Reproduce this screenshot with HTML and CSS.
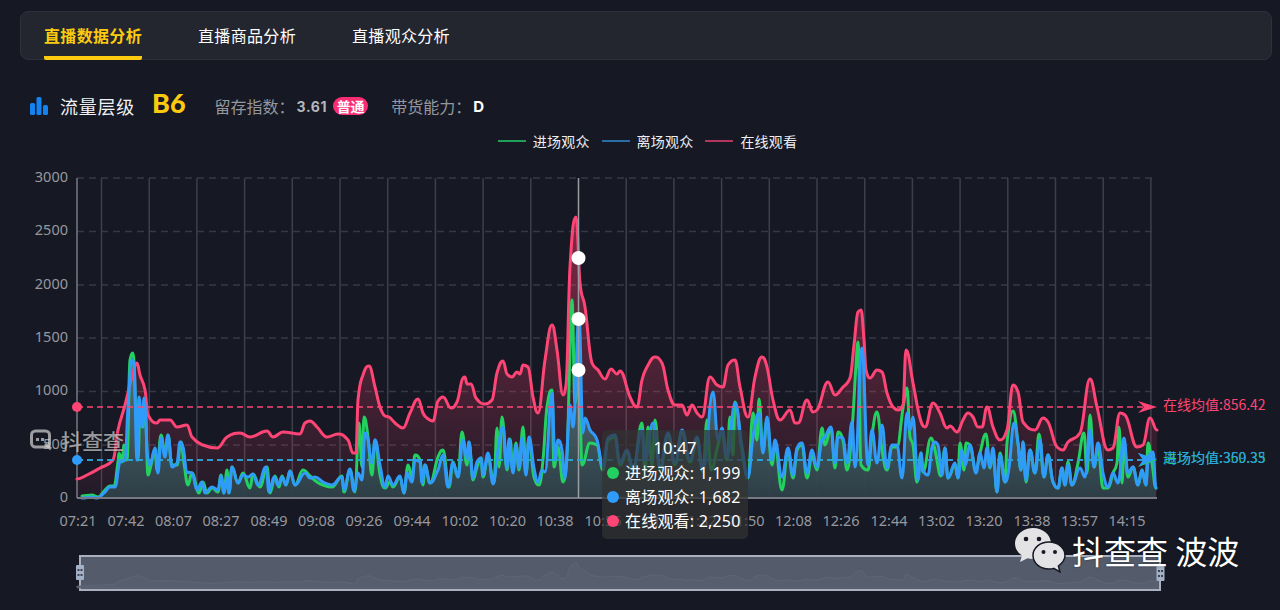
FILE: index.html
```html
<!DOCTYPE html>
<html lang="zh-CN">
<head>
<meta charset="utf-8">
<title>直播数据分析</title>
<link rel="stylesheet" href="styles.css">
</head>
<body>
<nav class="tabs">
  <a class="tab active">直播数据分析</a>
  <a class="tab">直播商品分析</a>
  <a class="tab">直播观众分析</a>
</nav>
<header class="stats">
  <svg class="bars-icon" width="18" height="18" viewBox="0 0 18 18"><rect x="0" y="6" width="5" height="12" rx="1.5"/><rect x="6.5" y="0" width="5" height="18" rx="1.5"/><rect x="13" y="8" width="5" height="10" rx="1.5"/></svg>
  <span class="stats-title">流量层级</span>
  <span class="level">B6</span>
  <span class="stat-label first">留存指数：</span>
  <span class="stat-value">3.61</span>
  <span class="badge">普通</span>
  <span class="stat-label second">带货能力：</span>
  <span class="stat-value white">D</span>
</header>
<div class="legend">
  <span class="legend-item"><i class="swatch green"></i>进场观众</span>
  <span class="legend-item"><i class="swatch blue"></i>离场观众</span>
  <span class="legend-item"><i class="swatch pink"></i>在线观看</span>
</div>
<div class="chart">
  <svg class="plot" width="1280" height="458" viewBox="0 152 1280 458">
    <defs>
      <linearGradient id="pinkFill" gradientUnits="userSpaceOnUse" x1="0" y1="217" x2="0" y2="498">
        <stop offset="0" stop-color="#ff406e" stop-opacity=".45"/>
        <stop offset="1" stop-color="#ff406e" stop-opacity=".05"/>
      </linearGradient>
      <linearGradient id="tealFill" gradientUnits="userSpaceOnUse" x1="0" y1="340" x2="0" y2="498">
        <stop offset="0" stop-color="#5e8688" stop-opacity=".8"/>
        <stop offset="1" stop-color="#2d3e47" stop-opacity=".97"/>
      </linearGradient>
    </defs>
    <g class="ylabels">
      <text x="68" y="182">3000</text><text x="68" y="235">2500</text><text x="68" y="289">2000</text>
      <text x="68" y="342">1500</text><text x="68" y="395">1000</text><text x="68" y="449">500</text><text x="68" y="502">0</text>
    </g>
    <path class="hgrid" d="M77 178H1157M77 231.5H1157M77 285H1157M77 338H1157M77 391.500H1157M77 445H1157"/>
    <path class="vgrid" d="M101.500 178V498M149.200 178V498M196.900 178V498M244.600 178V498M292.300 178V498M340 178V498M387.700 178V498M435.400 178V498M483.100 178V498M530.800 178V498M626.200 178V498M673.900 178V498M721.600 178V498M769.300 178V498M817 178V498M864.700 178V498M912.400 178V498M960.100 178V498M1007.800 178V498M1055.500 178V498M1103.200 178V498M1150.900 178V498"/>
    <path class="yaxis" d="M77 178V498"/>
    <path id="pinkArea" class="area-pink"/>
    <path id="tealArea" class="area-teal"/>
    <path id="greenLine" class="line line-green"/>
    <path id="pinkLine" class="line line-pink"/>
    <path id="blueLine" class="line line-blue"/>
    <path class="xaxis" d="M77 498H1157"/>
    <path class="cross" d="M578.500 178V498"/>
    <path class="mark mark-green" d="M77 460H1145"/>
    <path class="mark mark-blue" d="M77 460H1145"/>
    <path class="mark mark-pink" d="M77 407H1145"/>
    <circle class="dot-blue" cx="77" cy="460" r="5"/>
    <circle class="dot-pink" cx="77" cy="407" r="5"/>
    <path class="dot-green" d="M1157 460L1138 453L1144 460L1138 467Z"/>
    <path class="dot-blue" d="M1157 459L1138 453L1143 460L1139 466Z"/>
    <path class="dot-pink" d="M1157 407L1138 401L1144 407L1138 413Z"/>
    <text class="avg avg-pink" x="1163" y="410">在线均值:856.42</text>
    <text class="avg avg-green" x="1163" y="463">进场均值:360.35</text>
    <text class="avg avg-blue" x="1163" y="463">离场均值:359.33</text>
    <circle class="point" cx="578.500" cy="258" r="7"/>
    <circle class="point" cx="578.500" cy="319" r="7"/>
    <circle class="point" cx="578.500" cy="370" r="7"/>
    <g class="xlabels">
      <text x="78" y="526">07:21</text><text x="126" y="526">07:42</text><text x="173.500" y="526">08:07</text>
      <text x="221" y="526">08:27</text><text x="269" y="526">08:49</text><text x="316.500" y="526">09:08</text>
      <text x="364" y="526">09:26</text><text x="412" y="526">09:44</text><text x="460" y="526">10:02</text>
      <text x="507.500" y="526">10:20</text><text x="555" y="526">10:38</text><text x="603" y="526">10:56</text>
      <text x="650.500" y="526">11:14</text><text x="698" y="526">11:32</text><text x="746" y="526">11:50</text>
      <text x="793.500" y="526">12:08</text><text x="841" y="526">12:26</text><text x="889" y="526">12:44</text>
      <text x="936.500" y="526">13:02</text><text x="984" y="526">13:20</text><text x="1032" y="526">13:38</text>
      <text x="1079.500" y="526">13:57</text><text x="1127" y="526">14:15</text>
    </g>
    <rect class="zoom-window" x="80" y="556" width="1080" height="34"/>
    <path id="miniArea" class="mini" transform="translate(0 543) scale(1 .09)"/>
    <g class="zoom-handle"><rect x="76" y="565" width="8" height="15" rx="1"/><path class="grip" d="M77.500 569h2v2h-2zM80.500 569h2v2h-2zM77.500 574h2v2h-2zM80.500 574h2v2h-2z"/></g>
    <g class="zoom-handle"><rect x="1156.500" y="566" width="8" height="15" rx="1"/><path class="grip" d="M1158 570h2v2h-2zM1161 570h2v2h-2zM1158 575h2v2h-2zM1161 575h2v2h-2z"/></g>
  </svg>

  <div class="brand">
    <svg width="24" height="22" viewBox="0 0 24 22"><rect class="brand-box" x="1.500" y="2" width="18" height="16" rx="4"/><path class="brand-tail" d="M15 15l6 5"/><path class="brand-dots" d="M6 9h3v3H6zM11 9h3v3h-3z"/></svg>
    <span>抖查查</span>
  </div>

  <div class="tooltip">
    <div class="tooltip-time">10:47</div>
    <div class="tooltip-row"><i class="tip-dot green"></i>进场观众: 1,199</div>
    <div class="tooltip-row"><i class="tip-dot blue"></i>离场观众: 1,682</div>
    <div class="tooltip-row"><i class="tip-dot pink"></i>在线观看: 2,250</div>
  </div>

  <div class="wechat">
    <svg width="52" height="46" viewBox="0 0 52 46">
      <path class="bubble" d="M19 1C9 1 1 8 1 16.500c0 5 2.800 9.300 7 12L6 35l7.500-3.700c1.800.4 3.600.7 5.500.7 10 0 18-7 18-15.500S29 1 19 1z"/>
      <path class="bubble front" d="M35 15c-9 0-16 6-16 13.500S26 42 35 42c1.600 0 3.200-.2 4.700-.6L46 45l-1.600-6c3.400-2.500 6.600-6 6.600-10.500C51 21 44 15 35 15z"/>
      <circle class="eye" cx="12" cy="12" r="2.300"/><circle class="eye" cx="25" cy="12" r="2.300"/>
      <circle class="eye" cx="29.500" cy="25" r="2"/><circle class="eye" cx="41" cy="25" r="2"/>
    </svg>
    <span>抖查查 波波</span>
  </div>
</div>
<script src="chart.js"></script>
</body>
</html>
```
FILE: styles.css
```css
* { box-sizing: border-box; }
html, body { margin: 0; height: 610px; overflow: hidden; }
body {
  background: #161924;
  color: #fff;
  font-family: "Noto Sans", "Noto Sans CJK SC", sans-serif;
}
.tabs {
  display: flex;
  gap: 56px;
  margin: 11px 8px 0 20px;
  height: 49px;
  padding: 0 23px;
  background: #23252f;
  border: 1px solid #2e303b;
  border-radius: 8px;
}
.tab {
  height: 48px;
  line-height: 46px;
  font-size: 16px;
  letter-spacing: .33px;
  color: #fff;
  font-family: "Noto Sans CJK SC", sans-serif;
}
.tab.active {
  color: #fccb0f;
  font-weight: 700;
  border-bottom: 4px solid #fccb0f;
  border-radius: 2px;
}
.stats {
  display: flex;
  align-items: center;
  height: 34px;
  margin-top: 29px;
  padding-left: 30px;
  font-family: "Noto Sans CJK SC", sans-serif;
}
.bars-icon { fill: #1283f0; margin-right: 12px; }
.stats-title { font-size: 18px; letter-spacing: .75px; color: #f2f2f4; margin-right: 18px; }
.level { font-family: Lato, sans-serif; font-weight: 900; font-size: 27px; color: #fccb0f; margin: -7px 29px 0 -1px; line-height: 30px; }
.stat-label { font-size: 16px; color: #95979e; }
.stat-label.first { width: 80px; }
.stat-label.second { width: 80px; margin-left: 23px; }
.stat-value { font-family: Inter, sans-serif; font-weight: 700; font-size: 14px; letter-spacing: .6px; color: #b4b6bc; margin-left: 2px; }
.stat-value.white { color: #fff; font-size: 15px; margin-left: 2px; }
.badge {
  margin-left: 6px;
  height: 18px;
  line-height: 18px;
  padding: 0 3.500px;
  font-size: 14px;
  font-weight: 700;
  color: #fff;
  background: #fb2b74;
  border-radius: 9px;
}
.legend {
  display: flex;
  justify-content: center;
  gap: 12px;
  height: 20px;
  margin-top: 8px;
  padding-left: 15px;
  font-family: "Noto Sans CJK SC", sans-serif;
  font-size: 14px;
  letter-spacing: .2px;
  line-height: 20px;
  color: #eceef2;
}
.legend-item { display: flex; align-items: center; gap: 7px; }
.swatch { display: block; width: 28px; height: 2px; }
.swatch.green { background: #1f9e55; }
.swatch.blue { background: #2a6ea8; }
.swatch.pink { background: #b4345c; }
.chart { position: relative; height: 458px; margin-top: 1px; }
.plot { display: block; }
.ylabels text { text-anchor: end; font-size: 14.500px; fill: #96989e; }
.xlabels text { text-anchor: middle; font-size: 14.500px; fill: #96989e; }
.hgrid { stroke: #373943; stroke-width: 1.500; stroke-dasharray: 7 5; fill: none; }
.vgrid { stroke: #3d3f4b; stroke-width: 1.500; fill: none; }
.yaxis, .xaxis { stroke: #777a82; stroke-width: 1.500; fill: none; }
.xaxis { stroke-width: 2; }
.cross { stroke: #9a9ca1; stroke-width: 1.500; fill: none; }
.area-pink { fill: url(#pinkFill); }
.area-teal { fill: url(#tealFill); }
.line { fill: none; stroke-width: 3; stroke-linejoin: round; stroke-linecap: round; }
.line-green { stroke: #22d160; }
.line-blue { stroke: #2f9bfa; }
.line-pink { stroke: #ff4576; }
.mark { fill: none; stroke-width: 1.300; stroke-dasharray: 6 4; }
.mark-pink { stroke: #ff4576; }
.mark-green { stroke: #22d160; }
.mark-blue { stroke: #2f9bfa; }
.dot-pink { fill: #ff4576; }
.dot-blue { fill: #2f9bfa; }
.dot-green { fill: #22d160; }
.avg { font-family: "Noto Sans CJK SC", sans-serif; font-size: 14px; }
.avg-pink { fill: #ff4576; }
.avg-green { fill: #22d160; }
.avg-blue { fill: #2f9bfa; opacity: .85; }
.point { fill: #fff; }
.zoom-window { fill: #545b6b; stroke: #a9b1c0; stroke-width: 2; }
.mini { fill: #575e6e; stroke: #5f6676; stroke-width: 1; vector-effect: non-scaling-stroke; }
.zoom-handle rect { fill: #a3b1c6; }
.grip { fill: #3d4350; }
.brand {
  position: absolute;
  left: 30px;
  top: 276px;
  display: flex;
  align-items: center;
  gap: 7px;
  font-family: "Noto Sans CJK SC", sans-serif;
  font-weight: 500;
  font-size: 21px;
  line-height: 24px;
  color: rgba(214, 214, 214, .7);
  text-shadow: 0 0 3px rgba(0, 0, 0, .5);
}
.brand-box, .brand-tail { fill: none; stroke: rgba(214, 214, 214, .7); stroke-width: 3; }
.brand-dots { fill: rgba(214, 214, 214, .7); }
.tooltip {
  position: absolute;
  left: 602px;
  top: 278px;
  width: 146px;
  height: 109px;
  padding: 6px 0 0 5px;
  border-radius: 5px;
  background: rgba(50, 50, 50, .72);
  font-size: 16px;
  letter-spacing: .2px;
  line-height: 24px;
  color: #fff;
}
.tooltip-time { text-align: center; padding-right: 5px; margin-bottom: 1px; font-size: 16.500px; }
.tooltip-row { display: flex; align-items: center; gap: 6px; white-space: nowrap; font-family: "Noto Sans", "Noto Sans CJK SC", sans-serif; }
.tip-dot { display: block; width: 12px; height: 12px; border-radius: 50%; }
.tip-dot.green { background: #22d160; }
.tip-dot.blue { background: #2f9bfa; }
.tip-dot.pink { background: #ff4576; }
.wechat {
  position: absolute;
  left: 1014px;
  top: 375px;
  display: flex;
  align-items: center;
  gap: 6px;
  font-family: "Noto Sans CJK SC", sans-serif;
  font-size: 32px;
  line-height: 46px;
  color: #fff;
  white-space: nowrap;
  text-shadow: 0 0 2px rgba(0, 0, 0, .6);
}
.bubble { fill: #e3e3e6; }
.bubble.front { stroke: #161924; stroke-width: 1.500; }
.eye { fill: #161924; }
```
FILE: chart.js
```js
var pink = "77,479 87,475 100,468 113,460 118,430 125,405 132,377 137,363 140,375 145,390 148,415 157,423 160,420 170,420 177,427 187,425 192,437 203,445 217,448 227,437 240,433 250,437 267,431 273,437 283,432 300,434 305,423 310,421 317,427 327,437 338,434 348,440 353,453 356,453 358,400 363,375 369,366 375,387 380,407 385,416 389,417 395,423 403,428 410,413 418,399 423,413 427,418 433,421 438,401 443,397 451,408 457,402 463,378 465,377 467,384 471,384 476,398 485,404 492,400 497,373 503,361 507,374 512,377 517,372 520,374 523,365 528,367 533,397 538,413 545,360 552,325 557,350 563,395 566,385 570,267 576,217 580,283 585,307 592,363 598,370 605,379 611,369 617,374 620,371 630,397 637,407 642,380 647,367 655,357 662,363 668,390 675,405 682,405 687,415 692,405 697,413 702,417 710,377 717,385 723,387 728,365 735,360 740,387 748,417 755,377 762,357 767,367 773,400 780,420 790,410 795,423 798,423 807,400 813,412 817,410 828,382 835,395 843,387 850,378 854,345 858,312 861,310 864,340 866,370 870,378 877,370 882,372 887,393 893,407 898,410 903,405 906,350 913,383 920,418 925,427 933,403 940,413 947,428 950,426 957,432 963,420 968,413 973,417 978,427 982,427 987,407 993,427 1000,440 1007,430 1013,385 1018,392 1023,422 1035,430 1043,418 1048,422 1057,447 1063,450 1068,442 1080,433 1090,379 1097,407 1108,450 1113,448 1120,413 1125,415 1137,447 1143,445 1150,418 1157,430";

var blue = "82,498 92,497 97,498 105,492 110,487 115,487 120,462 125,460 128,407 132,360 134,363 137,460 139,397 142,427 144,398 148,460 150,465 155,448 158,473 161,438 165,457 168,435 172,467 177,463 180,442 183,447 187,472 192,473 197,490 202,482 205,493 212,487 218,490 221,476 224,493 227,477 229,493 232,467 238,483 243,475 248,477 253,474 258,485 266,467 269,492 274,477 278,485 282,477 286,485 290,471 295,485 305,473 310,478 315,477 323,482 332,485 342,477 344,490 350,469 354,491 358,473 362,480 365,433 368,440 372,463 375,440 380,465 385,487 388,476 393,485 400,476 404,493 407,473 412,482 415,460 420,462 422,483 425,465 430,483 438,470 443,455 448,487 453,463 458,477 463,440 467,458 469,442 473,478 477,462 481,458 483,475 488,453 493,484 498,450 503,427 507,468 509,439 513,473 516,445 519,468 522,438 526,475 529,437 534,468 538,482 542,470 545,472 552,393 555,460 558,440 562,450 565,478 570,405 573,427 579,317 583,433 585,418 590,430 597,440 603,467 608,438 615,435 620,463 627,450 633,467 642,430 645,460 653,423 660,467 668,433 675,463 682,430 690,460 697,437 703,470 713,392 718,440 722,428 727,457 735,403 742,447 748,477 753,437 759,413 763,453 767,417 772,460 775,440 782,477 788,448 793,475 797,448 802,443 807,473 812,450 817,467 822,440 825,437 831,427 835,463 838,437 843,438 847,463 852,422 855,467 862,348 868,465 872,430 877,463 882,425 887,468 892,445 897,445 902,478 907,413 910,430 913,417 918,480 921,453 923,470 928,475 932,447 935,442 938,445 942,475 945,448 948,478 955,463 958,478 962,450 965,465 970,445 976,473 980,453 984,468 987,448 990,467 993,448 997,492 1000,455 1005,482 1009,468 1014,423 1018,443 1021,470 1023,442 1026,480 1030,450 1035,473 1040,440 1044,477 1048,455 1053,482 1058,488 1062,468 1065,485 1068,465 1072,485 1080,468 1085,477 1090,430 1094,467 1098,443 1103,473 1108,487 1113,473 1118,483 1124,438 1128,473 1133,467 1138,485 1142,470 1146,485 1148,460 1153,452 1156,488";

var green = "82,496 92,495 98,497 105,490 110,486 114,486 118,462 119,453 122,462 124,445 127,460 130,360 133,353 136,417 138,460 140,410 143,427 145,400 148,475 151,465 155,450 157,470 161,435 165,453 168,435 172,465 177,465 181,442 184,463 188,485 192,473 199,493 203,482 207,493 212,488 218,492 221,475 224,493 227,470 229,493 232,467 238,483 243,473 250,488 253,474 260,487 267,467 270,493 275,476 279,487 282,476 286,485 290,471 295,485 303,470 310,476 317,482 323,485 332,487 342,476 344,492 350,470 355,492 359,423 362,467 364,417 368,437 372,475 375,440 380,475 385,488 390,482 393,487 400,477 404,493 408,465 412,477 415,455 420,460 423,485 425,465 430,483 438,457 443,450 449,487 453,462 458,477 462,432 467,465 469,442 473,480 477,467 481,458 483,477 488,457 494,483 497,428 499,467 502,417 507,470 510,439 513,470 516,443 519,470 523,427 526,473 529,438 534,477 539,485 543,460 547,407 552,390 554,467 558,447 563,482 567,453 570,350 572,300 575,403 579,373 582,465 590,443 597,445 603,470 608,440 615,437 620,465 627,452 633,470 642,423 645,470 648,427 652,465 655,420 660,470 668,435 675,465 682,432 690,462 697,440 703,472 707,420 711,470 718,445 722,432 727,460 730,417 733,455 735,402 742,450 748,478 753,413 757,440 759,399 763,450 767,420 772,465 775,445 782,490 788,450 793,478 797,450 802,445 807,478 812,455 817,470 822,428 825,445 831,428 835,468 838,432 843,440 847,470 852,430 856,365 858,342 861,465 868,470 872,435 877,412 882,450 887,470 892,447 897,447 903,408 907,388 910,437 913,445 917,482 921,453 923,472 931,438 935,450 941,476 945,448 948,478 955,465 958,478 960,443 964,470 966,443 970,445 976,470 980,453 986,434 990,468 993,453 997,492 1000,453 1005,482 1007,443 1013,411 1018,443 1021,470 1023,442 1026,482 1030,450 1035,473 1039,434 1044,477 1048,455 1053,482 1058,488 1062,468 1065,485 1068,462 1072,485 1078,463 1084,433 1087,473 1090,415 1094,467 1098,447 1103,488 1108,488 1113,473 1117,463 1119,427 1122,483 1124,445 1128,477 1133,467 1138,485 1142,470 1146,485 1148,443 1152,463 1156,488";

function parse(text) {
  return text.split(" ").map(function (pair) {
    return pair.split(",").map(Number);
  });
}

/* monotone smoothing: flat tangents at peaks and troughs, as the chart library draws them */
function slopes(points) {
  return points.map(function (p, i) {
    if (i === 0 || i === points.length - 1) return 0;
    var a = points[i - 1], b = points[i + 1];
    var s1 = (p[1] - a[1]) / (p[0] - a[0]);
    var s2 = (b[1] - p[1]) / (b[0] - p[0]);
    if (s1 * s2 <= 0) return 0;
    var limit = 2 * Math.min(Math.abs(s1), Math.abs(s2));
    var m = (b[1] - a[1]) / (b[0] - a[0]);
    return Math.max(-limit, Math.min(limit, m));
  });
}

function smooth(points) {
  var m = slopes(points);
  var d = "M" + points[0][0] + " " + points[0][1];
  for (var i = 0; i < points.length - 1; i++) {
    var p1 = points[i], p2 = points[i + 1];
    var h = (p2[0] - p1[0]) * 0.42;
    d += "C" + (p1[0] + h).toFixed(1) + " " + (p1[1] + m[i] * h).toFixed(1) +
         " " + (p2[0] - h).toFixed(1) + " " + (p2[1] - m[i + 1] * h).toFixed(1) +
         " " + p2[0] + " " + p2[1];
  }
  return d;
}

function closed(line, points) {
  return line + "V498H" + points[0][0] + "Z";
}

var pinkPts = parse(pink), bluePts = parse(blue), greenPts = parse(green);
var pinkD = smooth(pinkPts), blueD = smooth(bluePts), greenD = smooth(greenPts);

document.getElementById("pinkLine").setAttribute("d", pinkD);
document.getElementById("blueLine").setAttribute("d", blueD);
document.getElementById("greenLine").setAttribute("d", greenD);
document.getElementById("pinkArea").setAttribute("d", closed(pinkD, pinkPts));
document.getElementById("tealArea").setAttribute("d", closed(blueD, bluePts));
document.getElementById("miniArea").setAttribute("d", closed(pinkD, pinkPts));
```
